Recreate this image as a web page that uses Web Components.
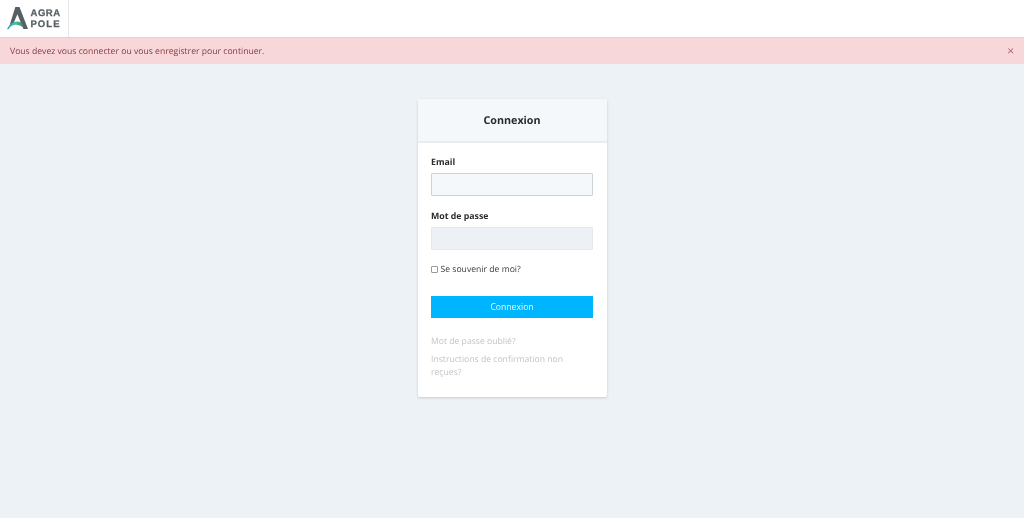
<!DOCTYPE html>
<html lang="fr"><head><meta charset="utf-8"><title>Connexion</title>
<style>
html,body{margin:0;padding:0;height:100%}
html{background:#edf2f6}
body{background:#edf2f6;font-family:"Open Sans",sans-serif;font-size:8.7px;overflow:hidden;text-rendering:geometricPrecision;filter:blur(.3px)}
</style></head><body>
<app-header></app-header>
<app-alert>Vous devez vous connecter ou vous enregistrer pour continuer.</app-alert>
<login-card></login-card>
<script>
function def(name,html){
  customElements.define(name,class extends HTMLElement{
    constructor(){super();this.attachShadow({mode:'open'}).innerHTML=html;}
  });
}
def('app-header',`<style>
:host{display:flex;height:37px;background:#fff;box-sizing:border-box}
.logo{width:69px;height:37px;box-sizing:border-box;border-right:1px solid #e4e7ea;display:flex;align-items:center;padding-left:7px;gap:2.5px}
svg{display:block;flex:none}
.w{display:flex;flex-direction:column;font:700 9.55px/11px "Liberation Sans",sans-serif;color:#566063;padding-top:1px;-webkit-text-stroke:.25px #566063}
.a{letter-spacing:.5px}
.o{letter-spacing:1px}
</style>
<div class="logo">
<svg width="21" height="23" viewBox="7 7 21 23">
<defs><linearGradient id="g" gradientUnits="userSpaceOnUse" x1="7" y1="0" x2="25" y2="0"><stop offset="0" stop-color="#2c9fc0"/><stop offset=".5" stop-color="#46c29b"/><stop offset=".8" stop-color="#3f8f80"/><stop offset="1" stop-color="#5a6668"/></linearGradient></defs>
<path d="M15.3 7h4.2L28 29h-4.6L17.4 14.2 13.4 23.6C12 24.2 10.6 25 9.4 26z" fill="#566063"/>
<path d="M7 29.3C9.2 24.6 13 21.6 17 21.6c3 0 5.2 1.6 6.6 4l.8 2.4C21 25.6 18 24.4 15 24.7c-3 .3-5.2 2-6.4 4.6z" fill="url(#g)"/>
</svg>
<div class="w"><span class="a">AGRA</span><span class="o">POLE</span></div>
</div>`);
def('app-alert',`<style>
:host{display:flex;align-items:center;justify-content:space-between;height:27px;box-sizing:border-box;background:#f8d7da;border-top:1px solid #efc9cb;color:#843a40;padding:0 10px 1px;font:400 8.63px "Open Sans",sans-serif}
b{font:400 12px "Open Sans",sans-serif;color:#a0686e;padding-left:1px}
</style><span><slot></slot></span><b>×</b>`);
def('login-card',`<style>
:host{display:block;width:189px;margin:35px auto 0;background:#fff;border-radius:2px;box-shadow:0 1px 3px rgba(0,0,0,.16);font:400 8.65px "Open Sans",sans-serif;color:#3a3a3a}
header{height:44px;box-sizing:border-box;background:#f5f8fa;border-bottom:2px solid #e9edf0;display:flex;align-items:center;justify-content:center;font-size:10.75px;font-weight:700;color:#2a2a2a;padding-top:2px}
form{padding:13px 13.5px 0 13.5px;display:flex;flex-direction:column}
label.t{font-weight:700;font-size:8.75px;line-height:13px;color:#2a2a2a;display:block}
.i{display:block;box-sizing:border-box;width:162px;height:23px;margin-top:4px;border:1px solid #cbd3d7;border-radius:1px;background:#f5f8fa;padding:0;outline:0}
.p{background:#edf1f5;border-color:#e3e8ec}
.t2{margin-top:14px}
.c{display:flex;align-items:center;margin-top:13px;height:13px;line-height:13px}
.box{box-sizing:border-box;width:7px;height:7px;border:1px solid #9a9a9a;border-radius:1px;background:#fff;margin-right:2.5px;flex:none}
.b{margin-top:20px;height:22px;background:#00b5ff;color:#eaf8ff;display:flex;align-items:center;justify-content:center;width:162px;border:0;padding:0;font:inherit}
a{color:#c4c4c4;display:block;line-height:13px;text-decoration:none}
.l1{margin-top:16px;padding-top:.5px}
.l2{margin-top:5px;padding-bottom:18.5px;width:150px}
</style>
<header>Connexion</header>
<form onsubmit="return false">
<label class="t">Email</label><input class="i" type="text" aria-label="Email">
<label class="t t2">Mot de passe</label><input class="i p" type="password" aria-label="Mot de passe">
<div class="c"><span class="box"></span>Se souvenir de moi?</div>
<button class="b" type="button">Connexion</button>
<a class="l1" href="#">Mot de passe oublié?</a>
<a class="l2" href="#">Instructions de confirmation non reçues?</a>
</form>`);
</script>
</body></html>
